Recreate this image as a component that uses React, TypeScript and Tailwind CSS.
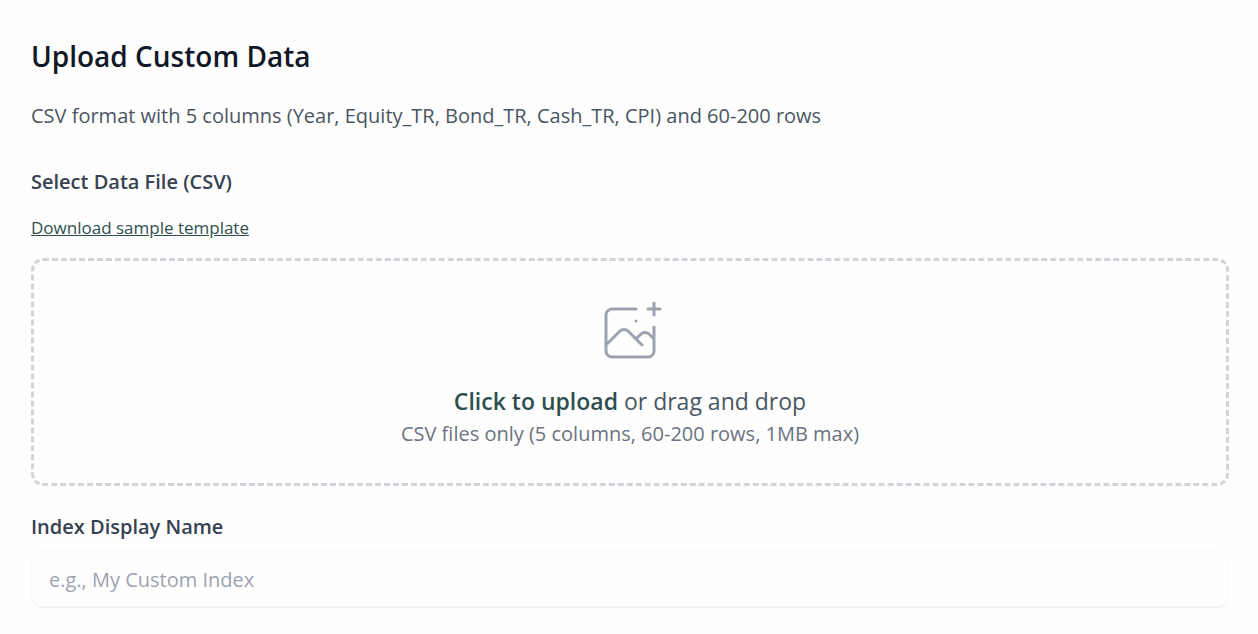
const DropIcon = () => (
  <svg
    className="mx-auto h-[72px] w-[72px] text-[#9ca3af]"
    stroke="currentColor"
    fill="none"
    viewBox="0 0 48 48"
    aria-hidden="true"
  >
    <path
      d="M28 8H12a4 4 0 00-4 4v20m32-12v8m0 0v8a4 4 0 01-4 4H12a4 4 0 01-4-4v-4m32-4l-3.172-3.172a4 4 0 00-5.656 0L28 28M8 32l9.172-9.172a4 4 0 015.656 0L28 28m0 0l4 4m4-24h8m-4-4v8m-12 4h.02"
      strokeWidth="2"
      strokeLinecap="round"
      strokeLinejoin="round"
    />
  </svg>
);

const App = () => {
  return (
    <div className="min-h-screen bg-[#fefefe] pt-8 pr-[29px] pb-6 pl-[31px] font-['Open_Sans','Noto_Sans',sans-serif]">
      <h2 className="text-[28px] leading-12 font-semibold text-[#111827]">
        Upload Custom Data
      </h2>
      <p className="mt-5 text-[20px] leading-8 text-[#4b5563]">
        CSV format with 5 columns (Year, Equity_TR, Bond_TR, Cash_TR, CPI) and 60-200 rows
      </p>
      <form className="mt-[34px]" onSubmit={(e) => e.preventDefault()}>
        <label htmlFor="data-file" className="block text-[20px] leading-8 font-semibold text-[#374151]">
          Select Data File (CSV)
        </label>
        <a href="#template" className="mt-4 block w-fit text-[17px] leading-7 text-[#2f4f4f] underline">
          Download sample template
        </a>
        <label
          htmlFor="data-file"
          className="mt-4 block cursor-pointer rounded-xl border-[3px] border-dashed border-[#d1d5db] py-9 text-center"
        >
          <DropIcon />
          <span className="mt-3 block text-[23px] leading-10 text-[#4b5563]">
            <span className="font-semibold text-[#2f4f4f]">Click to upload</span> or drag and drop
          </span>
          <span className="block text-[20px] leading-[26px] text-[#6b7280]">
            CSV files only (5 columns, 60-200 rows, 1MB max)
          </span>
          <input id="data-file" type="file" accept=".csv" className="sr-only" />
        </label>
        <label htmlFor="index-name" className="mt-[25px] block text-[20px] leading-8 font-semibold text-[#374151]">
          Index Display Name
        </label>
        <input
          id="index-name"
          type="text"
          placeholder="e.g., My Custom Index"
          className="mt-2 block h-14 w-full rounded-xl border border-[#f9f9f9] px-[17px] text-[20px] text-[#111827] shadow-2xs placeholder:text-[#9ca3af]"
        />
      </form>
    </div>
  );
};

export default App;
